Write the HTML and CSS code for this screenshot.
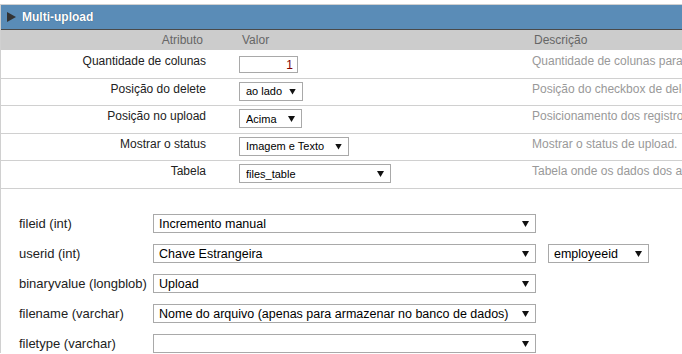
FILE: index.html
```html
<!DOCTYPE html>
<html lang="pt">
<head>
    <meta charset="UTF-8">
    <title>Multi-upload</title>
    <link rel="stylesheet" href="styles.css">
</head>
<body>
    <div class="panel">
        <div class="panel-title"><span class="arrow"></span>Multi-upload</div>
        <table class="props">
            <colgroup>
                <col class="c-attr">
                <col class="c-val">
                <col>
            </colgroup>
            <tr>
                <th class="attr">Atributo</th>
                <th class="val">Valor</th>
                <th class="desc">Descrição</th>
            </tr>
            <tr>
                <td class="attr">Quantidade de colunas</td>
                <td class="val"><input class="num" type="text" value="1"></td>
                <td class="desc">Quantidade de colunas para exibição</td>
            </tr>
            <tr>
                <td class="attr">Posição do delete</td>
                <td class="val"><span class="sel small w-delete"><select><option>ao lado</option></select></span></td>
                <td class="desc">Posição do checkbox de delete</td>
            </tr>
            <tr>
                <td class="attr">Posição no upload</td>
                <td class="val"><span class="sel small w-upload"><select><option>Acima</option></select></span></td>
                <td class="desc">Posicionamento dos registros</td>
            </tr>
            <tr>
                <td class="attr">Mostrar o status</td>
                <td class="val"><span class="sel small w-status"><select><option>Imagem e Texto</option></select></span></td>
                <td class="desc">Mostrar o status de upload.</td>
            </tr>
            <tr>
                <td class="attr">Tabela</td>
                <td class="val"><span class="sel small w-table"><select><option>files_table</option></select></span></td>
                <td class="desc">Tabela onde os dados dos arquivos</td>
            </tr>
        </table>
        <div class="fields">
            <label>fileid (int)</label>
            <div class="field-row"><span class="sel big"><select><option>Incremento manual</option></select></span></div>
            <label>userid (int)</label>
            <div class="field-row">
                <span class="sel big"><select><option>Chave Estrangeira</option></select></span>
                <span class="sel fk"><select><option>employeeid</option></select></span>
            </div>
            <label>binaryvalue (longblob)</label>
            <div class="field-row"><span class="sel big"><select><option>Upload</option></select></span></div>
            <label>filename (varchar)</label>
            <div class="field-row"><span class="sel big"><select><option>Nome do arquivo (apenas para armazenar no banco de dados)</option></select></span></div>
            <label>filetype (varchar)</label>
            <div class="field-row"><span class="sel big"><select><option></option></select></span></div>
        </div>
    </div>
</body>
</html>
```

FILE: styles.css
```css
body {
    margin: 0;
    font-family: "Liberation Sans", Arial, sans-serif;
    font-size: 12px;
    background: #fff;
    overflow: hidden;
}
.panel {
    margin-top: 4px;
    width: 940px;
    border-top: 1px solid #d0d0d0;
    border-left: 1px solid #d0d0d0;
}
.panel-title {
    display: flex;
    align-items: center;
    height: 24px;
    padding-left: 6px;
    background: #5a8cb7;
    border-bottom: 1px solid #4a4a4a;
    color: #fff;
    font-weight: bold;
    text-shadow: 0 0 1px #2c4f6e;
}
.arrow {
    width: 9px;
    height: 10px;
    margin-right: 6px;
    background: #333;
    clip-path: polygon(0 0, 100% 50%, 0 100%);
}
.props {
    width: 100%;
    table-layout: fixed;
    border-collapse: collapse;
}
.c-attr { width: 235px; }
.c-val { width: 294px; }
.props th {
    height: 20px;
    padding: 0;
    background: #cccccc;
    color: #666;
    font-weight: normal;
    text-align: left;
    border-bottom: 1px solid #fff;
}
.props th.attr {
    text-align: right;
    padding-right: 33px;
}
.props th.val {
    padding-left: 6px;
}
.props th.desc {
    padding-left: 4px;
}
.props td {
    height: 27.5px;
    padding: 3px 0 0;
    vertical-align: top;
    border-top: 1px solid #d0d0d0;
    box-sizing: border-box;
    white-space: nowrap;
    overflow: hidden;
}
.props td.attr {
    padding-right: 30px;
    text-align: right;
    color: #222;
}
.props td.val {
    padding-left: 3px;
}
.props td.desc {
    padding-left: 2px;
    color: #999;
}
.num {
    box-sizing: border-box;
    width: 59px;
    height: 17px;
    margin: 2px 0 0;
    padding: 0 4px;
    border: 1px solid #a9a9a9;
    font: 12px "Liberation Sans", Arial, sans-serif;
    color: #800000;
    text-align: right;
}
.sel {
    position: relative;
    display: inline-block;
}
.sel select {
    appearance: none;
    -webkit-appearance: none;
    box-sizing: border-box;
    width: 100%;
    height: 19px;
    margin: 0;
    padding: 0 16px 0 6px;
    border: 1px solid #a9a9a9;
    border-radius: 0;
    background: #fff;
    color: #000;
    font-family: "Liberation Sans", Arial, sans-serif;
}
.sel::after {
    content: "";
    position: absolute;
    right: 7px;
    top: 7px;
    width: 7px;
    height: 6px;
    background: #111;
    clip-path: polygon(0 0, 100% 0, 50% 100%);
    pointer-events: none;
}
.small select {
    font-size: 11px;
}
.w-delete { width: 64px; }
.w-upload { width: 63px; }
.w-status { width: 110px; }
.w-table { width: 152px; }
.fields {
    display: grid;
    grid-template-columns: 134px auto;
    row-gap: 11px;
    align-items: center;
    padding: 25px 0 0 18px;
    border-top: 1px solid #d0d0d0;
    font-size: 13px;
}
.fields label {
    color: #222;
    white-space: nowrap;
}
.field-row {
    display: flex;
    gap: 12px;
}
.big {
    width: 383px;
}
.big select,
.fk select {
    font-size: 12.5px;
    padding-left: 5px;
}
.fk {
    width: 101px;
}
```
